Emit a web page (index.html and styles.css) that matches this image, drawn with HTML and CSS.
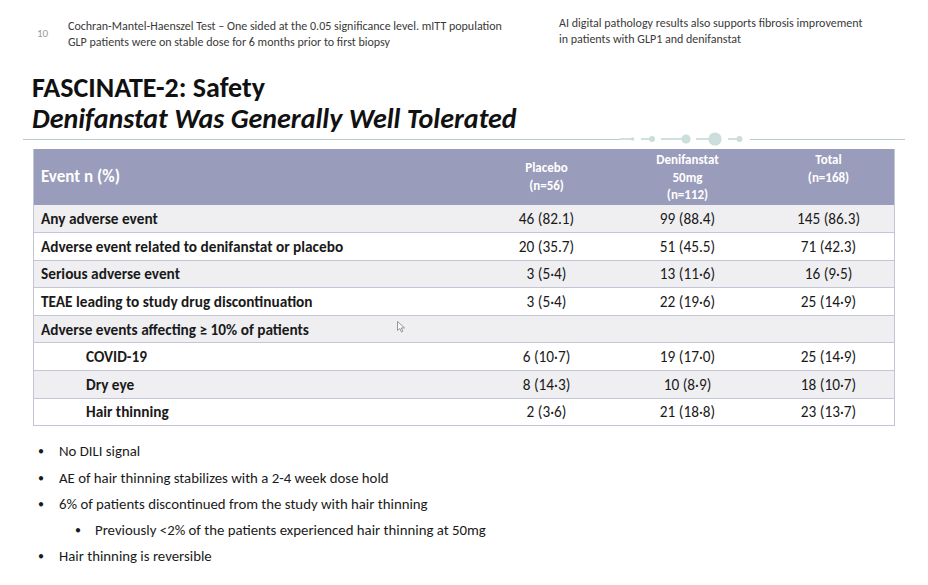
FILE: index.html
```html
<!DOCTYPE html>
<html lang="en">
<head>
    <meta charset="UTF-8">
    <meta name="viewport" content="width=device-width, initial-scale=1.0">
    <title>FASCINATE-2: Safety</title>
    <link rel="stylesheet" href="styles.css">
</head>
<body>
    <div class="slide">
        <div class="top-notes">
            <div class="page-num">10</div>
            <div class="footnote">
                Cochran-Mantel-Haenszel Test – One sided at the 0.05 significance level. mITT population<br>
                GLP patients were on stable dose for 6 months prior to first biopsy
            </div>
            <div class="side-note">
                AI digital pathology results also supports fibrosis improvement<br>
                in patients with GLP1 and denifanstat
            </div>
        </div>

        <div class="title">
            <div class="title-main">FASCINATE-2: Safety</div>
            <div class="title-sub">Denifanstat Was Generally Well Tolerated</div>
        </div>

        <div class="rule">
            <div class="rule-line"></div>
            <svg class="rule-dots" width="130" height="18" viewBox="0 0 130 18">
                <g stroke="#b3cbc8" stroke-width="1.2">
                    <line x1="0" y1="9" x2="12" y2="9"/>
                    <line x1="21" y1="9" x2="32" y2="9"/>
                    <line x1="41" y1="9" x2="66" y2="9"/>
                    <line x1="76" y1="9" x2="95" y2="9"/>
                    <line x1="108" y1="9" x2="120" y2="9"/>
                </g>
                <g fill="#cbdedb">
                    <circle cx="12.5" cy="9" r="1.8"/>
                    <circle cx="32" cy="9" r="3"/>
                    <circle cx="66" cy="9" r="4.6"/>
                    <circle cx="95" cy="9" r="6.6"/>
                    <circle cx="119.5" cy="9" r="3"/>
                </g>
            </svg>
            <div class="rule-line rule-right"></div>
        </div>

        <table class="ae-table">
            <thead>
                <tr>
                    <th class="col-label">Event n (%)</th>
                    <th class="col-num"><div class="head-mid">Placebo<br>(n=56)</div></th>
                    <th class="col-num">Denifanstat<br>50mg<br>(n=112)</th>
                    <th class="col-num">Total<br>(n=168)</th>
                </tr>
            </thead>
            <tbody>
                <tr><td>Any adverse event</td><td>46 (82.1)</td><td>99 (88.4)</td><td>145 (86.3)</td></tr>
                <tr><td>Adverse event related to denifanstat or placebo</td><td>20 (35.7)</td><td>51 (45.5)</td><td>71 (42.3)</td></tr>
                <tr><td>Serious adverse event</td><td>3 (5·4)</td><td>13 (11·6)</td><td>16 (9·5)</td></tr>
                <tr><td>TEAE leading to study drug discontinuation</td><td>3 (5·4)</td><td>22 (19·6)</td><td>25 (14·9)</td></tr>
                <tr><td>Adverse events affecting ≥ 10% of patients</td><td></td><td></td><td></td></tr>
                <tr><td class="sub">COVID-19</td><td>6 (10·7)</td><td>19 (17·0)</td><td>25 (14·9)</td></tr>
                <tr><td class="sub">Dry eye</td><td>8 (14·3)</td><td>10 (8·9)</td><td>18 (10·7)</td></tr>
                <tr><td class="sub">Hair thinning</td><td>2 (3·6)</td><td>21 (18·8)</td><td>23 (13·7)</td></tr>
            </tbody>
        </table>

        <ul class="bullets">
            <li>No DILI signal</li>
            <li>AE of hair thinning stabilizes with a 2-4 week dose hold</li>
            <li>6% of patients discontinued from the study with hair thinning</li>
            <li class="sub-bullet">Previously &lt;2% of the patients experienced hair thinning at 50mg</li>
            <li>Hair thinning is reversible</li>
        </ul>

        <svg class="cursor" width="9" height="12" viewBox="0 0 9 12">
            <path d="M0.5 0.5 L0.5 9.5 L2.8 7.4 L4.4 11 L5.8 10.4 L4.3 6.9 L7.5 6.9 Z" fill="#fff" stroke="#8a8a8a" stroke-width="0.9"/>
        </svg>
    </div>
</body>
</html>
```

FILE: styles.css
```css
body {
    margin: 0;
    background-color: #fff;
    font-family: Carlito, Lato, "Liberation Sans", sans-serif;
    color: #1a1a1a;
}

.slide {
    position: relative;
    width: 928px;
    height: 585px;
    overflow: hidden;
}

.top-notes {
    display: flex;
    padding-top: 18px;
    height: 44px;
    color: #3a3a3a;
    font-size: 12px;
    line-height: 16px;
}
.page-num {
    width: 31px;
    padding-left: 37px;
    padding-top: 8px;
    font-size: 11px;
    color: #9a9a9a;
}
.footnote {
    width: 491px;
}
.side-note {
    margin-top: -3px;
}

.title {
    padding-left: 32px;
    padding-top: 11px;
    font-weight: bold;
    font-size: 28px;
    line-height: 30.5px;
    color: #111;
}
.title-sub {
    font-style: italic;
}

.rule {
    display: flex;
    align-items: center;
    height: 18px;
    margin-top: -4px;
    padding-left: 23px;
    padding-right: 23px;
}
.rule-line {
    flex: 1;
    height: 1px;
    background-color: #b8cdcb;
}
.rule-right {
    flex: none;
    width: 155px;
}
.rule-dots {
    display: block;
}

.ae-table {
    margin-top: 1px;
    margin-left: 33px;
    width: 862px;
    border-collapse: collapse;
    border-left: 1px solid #c4c5d4;
    border-right: 1px solid #c4c5d4;
    font-size: 15.3px;
}
.ae-table thead tr {
    height: 56px;
}
.ae-table th {
    background-color: #9a9cbb;
    color: #fff;
    font-weight: bold;
    padding: 0;
}
.ae-table .col-label {
    text-align: left;
    padding-left: 7px;
    padding-bottom: 1px;
    font-size: 17px;
    vertical-align: middle;
}
.ae-table .col-num {
    width: 131px;
    padding-left: 10px;
    font-size: 13px;
    line-height: 17.5px;
    vertical-align: top;
    padding-top: 2px;
}
.head-mid {
    margin-top: 8px;
}
.ae-table tbody tr {
    height: 27.6px;
}
.ae-table td {
    padding: 0 0 0 10px;
    text-align: center;
    border-bottom: 1px solid #c4c5d6;
}
.ae-table td:first-child {
    text-align: left;
    padding-left: 7px;
    font-weight: bold;
}
.ae-table td.sub {
    padding-left: 52px;
}
.ae-table tbody tr:nth-child(odd) {
    background-color: #efeff2;
}

.bullets {
    list-style: none;
    margin: 12px 0 0 0;
    padding: 0;
    font-size: 14.8px;
    line-height: 26.3px;
    color: #1a1a1a;
}
.bullets li {
    position: relative;
    padding-left: 59px;
}
.bullets li::before {
    content: "•";
    position: absolute;
    left: 38px;
    font-size: 12px;
}
.bullets .sub-bullet {
    padding-left: 95px;
}
.bullets .sub-bullet::before {
    left: 75px;
}

.cursor {
    position: absolute;
    left: 397px;
    top: 321px;
}
```
